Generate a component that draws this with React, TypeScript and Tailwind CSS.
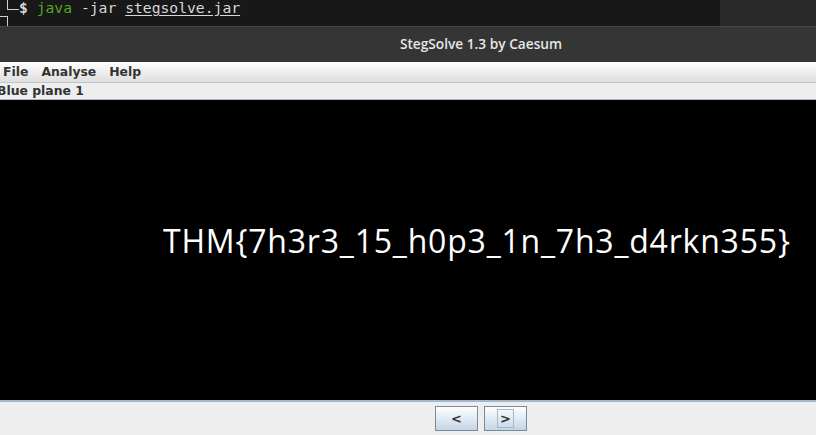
export default function App() {
  return (
    <div className="w-[816px] h-[435px] overflow-hidden flex flex-col bg-[#eeeeee]">
      {/* terminal strip behind the window */}
      <div className="h-[26px] flex shrink-0 bg-[#181818]">
        <div className="relative flex-1 font-['DejaVu_Sans_Mono',monospace] text-[14.7px] leading-none">
          <span className="absolute left-[7px] top-0 w-px h-[9px] bg-[#cfcfcf]" />
          <span className="absolute left-[7px] top-[9px] w-[12px] h-px bg-[#cfcfcf]" />
          <span className="absolute left-0 top-[16px] w-[8px] h-px bg-[#cfcfcf]" />
          <span className="absolute left-[7px] top-[16px] w-px h-[10px] bg-[#cfcfcf]" />
          <div className="absolute left-[19px] top-[1px] flex whitespace-pre text-[#d8d8d8]">
            <span className="font-bold">$</span>
            <span> </span>
            <span className="text-[#57a61f]">java</span>
            <span> -jar </span>
            <span className="underline underline-offset-2">stegsolve.jar</span>
          </div>
        </div>
        <div className="w-[96px] bg-[#282828]" />
      </div>

      {/* title bar */}
      <div className="h-[36px] shrink-0 bg-[#353535] border-t border-[#474747] flex items-center justify-center pl-[146px] font-['Open_Sans',sans-serif] text-[13.7px] font-semibold text-[#e6e6e6]">
        StegSolve 1.3 by Caesum
      </div>

      {/* menu bar */}
      <div className="h-[21px] shrink-0 bg-gradient-to-b from-[#ffffff] to-[#dedede] border-b border-[#c4c4c4] flex items-center gap-[13px] pl-[3px] font-['DejaVu_Sans',sans-serif] text-[12.4px] font-bold text-[#333333]">
        <span>File</span>
        <span>Analyse</span>
        <span>Help</span>
      </div>

      {/* label */}
      <div className="h-[16px] shrink-0 bg-[#eeeeee] flex items-center -ml-[3px] font-['DejaVu_Sans',sans-serif] text-[12.4px] font-bold text-[#333333]">
        Blue plane 1
      </div>

      {/* image panel */}
      <div className="h-[301px] shrink-0 bg-black border-t border-[#a3b8cc] flex items-start">
        <div className="mt-[125px] ml-[163px] font-['Open_Sans',sans-serif] text-[32px] leading-none text-white tracking-[0.8px] whitespace-nowrap">
          THM{"{"}7h3r3_15_h0p3_1n_7h3_d4rkn355{"}"}
        </div>
      </div>

      {/* bottom controls */}
      <div className="flex-1 border-t-2 border-[#a3b8cc] bg-[#eeeeee] flex justify-center items-start pt-[4px] gap-[6px] pl-[146px] font-['DejaVu_Sans',sans-serif] text-[13px] font-bold text-[#333333]">
        <button className="w-[43px] h-[25px] border border-[#7a8a99] bg-gradient-to-b from-[#ffffff] to-[#c4d5e6] flex items-center justify-center">
          &lt;
        </button>
        <button className="w-[43px] h-[25px] border border-[#7a8a99] bg-gradient-to-b from-[#ffffff] to-[#c4d5e6] flex items-center justify-center">
          <span className="border border-[#a3b8cc] px-[2px] leading-[17px]">&gt;</span>
        </button>
      </div>
    </div>
  );
}
